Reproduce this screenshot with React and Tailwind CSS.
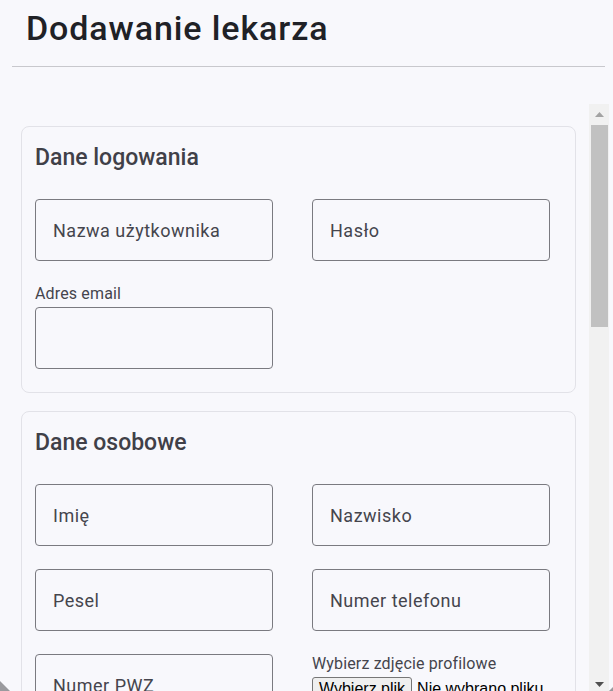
import React from "react";

const roboto = { fontFamily: "Roboto, 'Noto Sans', sans-serif" };

function Field({ label }) {
  return (
    <div className="h-[62px] w-[238px] rounded-[4px] border border-[#7a7a80] flex items-center pl-[17px] text-[18px] tracking-[0.5px] text-[#45454d]">
      {label}
    </div>
  );
}

function LabeledField({ label }) {
  return (
    <div className="flex flex-col w-[238px]">
      <div className="text-[16px] leading-[19px] tracking-[0.15px] text-[#45454d] mb-[4px]">{label}</div>
      <div className="h-[62px] w-[238px] rounded-[4px] border border-[#7a7a80]" />
    </div>
  );
}

function FileField() {
  return (
    <div className="flex flex-col">
      <div className="text-[16px] leading-[19px] tracking-[0.15px] text-[#45454d] mb-[4px]">Wybierz zdjęcie profilowe</div>
      <div className="flex items-center text-[16px] text-black" style={{ fontFamily: "'Liberation Sans', Arial, sans-serif" }}>
        <span className="px-[6px] h-[24px] flex items-center border border-[#767676] rounded-[3px] bg-[#efefef]">Wybierz plik</span>
        <span className="ml-[5px]">Nie wybrano pliku</span>
      </div>
    </div>
  );
}

function Card({ title, children }) {
  return (
    <div className="w-[555px] rounded-[8px] border border-[#e2e2e8] pt-[17px] pb-[23px] pl-[13px]">
      <div className="text-[23px] leading-[28px] font-medium text-[#404048] mb-[27px]">{title}</div>
      <div className="grid grid-cols-[238px_238px] gap-x-[39px] gap-y-[23px] items-start">
        {children}
      </div>
    </div>
  );
}

function Scrollbar() {
  return (
    <div className="w-[20px] h-[590px] bg-[#f1f1f1] flex flex-col shrink-0">
      <div className="h-[20px] shrink-0 flex items-center justify-center">
        <svg width="9" height="5" viewBox="0 0 9 5"><path d="M0 5 L4.5 0 L9 5 Z" fill="#a3a3a3" /></svg>
      </div>
      <div className="h-[550px] shrink-0 pt-px pl-[2px] pr-px">
        <div className="h-[202px] bg-[#c1c1c1]" />
      </div>
      <div className="h-[20px] shrink-0 flex items-start justify-center pt-[8px]">
        <svg width="9" height="5" viewBox="0 0 9 5"><path d="M0 0 L9 0 L4.5 5 Z" fill="#505050" /></svg>
      </div>
    </div>
  );
}

export default function App() {
  return (
    <div className="relative w-[613px] h-[691px] overflow-hidden bg-[#f8f8fc]" style={roboto}>
      <div className="pt-[8px] pl-[26px]">
        <h1 className="text-[34px] leading-[40px] font-medium tracking-[0.9px] text-[#202126]">Dodawanie lekarza</h1>
      </div>
      <div className="mt-[18px] ml-[12px] w-[593px] h-px bg-[#c8c8cd]" />
      <div className="mt-[37px] ml-[7px] w-[602px] h-[590px] flex items-start">
        <div className="flex-1 h-[590px] overflow-hidden">
          <div className="pl-[14px] pt-[22px] flex flex-col gap-[18px]">
            <Card title="Dane logowania">
              <Field label="Nazwa użytkownika" />
              <Field label="Hasło" />
              <LabeledField label="Adres email" />
            </Card>
            <Card title="Dane osobowe">
              <Field label="Imię" />
              <Field label="Nazwisko" />
              <Field label="Pesel" />
              <Field label="Numer telefonu" />
              <Field label="Numer PWZ" />
              <FileField />
            </Card>
          </div>
        </div>
        <Scrollbar />
      </div>
      <div className="absolute left-0 bottom-0 w-[10px] h-[10px] bg-[#9a9a9e] [clip-path:polygon(0_0,100%_100%,0_100%)]" />
      <div className="absolute right-0 bottom-0 w-[4px] h-[4px] bg-[#9a9a9e] [clip-path:polygon(100%_0,100%_100%,0_100%)]" />
    </div>
  );
}
